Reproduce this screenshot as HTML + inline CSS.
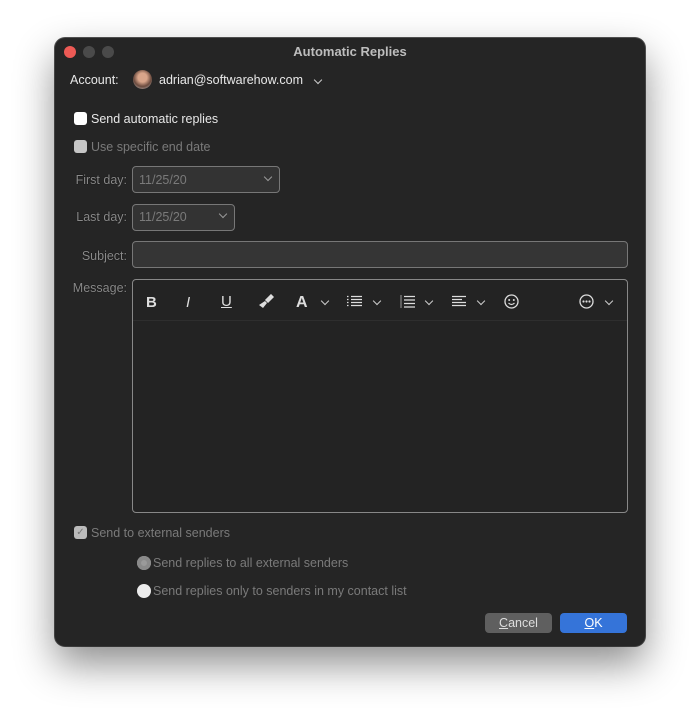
<!DOCTYPE html>
<html><head><style>
body{margin:0;width:700px;height:719px;background:#fff;position:relative;overflow:hidden;font-family:"Liberation Sans",sans-serif;}
.win{position:absolute;left:55px;top:38px;width:590px;height:608px;background:#252525;border-radius:10px;box-shadow:0 18px 40px rgba(0,0,0,.45),0 0 0 1px #555;}
.a{position:absolute;}
.t{font-size:12.5px;color:#e8e8e8;}
.d{font-size:12.5px;color:#7a7a7a;}
.lab{font-size:12.5px;color:#8a8a8a;text-align:right;width:72px;text-shadow:0 0 1px #000;}
.box{position:absolute;border:1px solid #777;border-radius:4px;background:#333;}
.cb{position:absolute;width:13px;height:13px;border-radius:3px;}
.ic{position:absolute;color:#ddd;font-size:15px;font-weight:bold;}
.chev{position:absolute;width:5px;height:5px;border-right:1.4px solid #ccc;border-bottom:1.4px solid #ccc;transform:rotate(45deg);}
svg{position:absolute;}
</style></head><body>
<div class="win">
  <div class="a" style="left:9px;top:8px;width:12px;height:12px;border-radius:50%;background:#ed5a55"></div>
  <div class="a" style="left:28px;top:8px;width:12px;height:12px;border-radius:50%;background:#4a4a4a"></div>
  <div class="a" style="left:47px;top:8px;width:12px;height:12px;border-radius:50%;background:#4a4a4a"></div>
  <div class="a" style="left:0;width:590px;top:6px;text-align:center;font-size:13px;font-weight:bold;color:#bdbdbd">Automatic Replies</div>

  <div class="a t" style="left:15px;top:35px">Account:</div>
  <div class="a" style="left:78px;top:32px;width:19px;height:19px;border-radius:50%;background:radial-gradient(circle at 50% 40%,#d9a58a 0 30%,#6a4a3e 60%,#ccc 100%)"></div>
  <div class="a t" style="left:104px;top:35px">adrian@softwarehow.com</div>
  <div class="chev" style="left:260px;top:39px"></div>

  <div class="cb" style="left:19px;top:74px;background:#fff"></div>
  <div class="a t" style="left:36px;top:74px">Send automatic replies</div>
  <div class="cb" style="left:19px;top:102px;background:#d8d8d8;opacity:.9"></div>
  <div class="a d" style="left:36px;top:102px">Use specific end date</div>

  <div class="a lab" style="left:0;top:135px">First day:</div>
  <div class="box" style="left:77px;top:128px;width:146px;height:25px"></div>
  <div class="a d" style="left:84px;top:135px">11/25/20</div>
  <div class="chev" style="left:210px;top:136px;border-color:#999"></div>

  <div class="a lab" style="left:0;top:172px">Last day:</div>
  <div class="box" style="left:77px;top:166px;width:101px;height:25px"></div>
  <div class="a d" style="left:84px;top:172px">11/25/20</div>
  <div class="chev" style="left:165px;top:173px;border-color:#999"></div>

  <div class="a lab" style="left:0;top:211px">Subject:</div>
  <div class="box" style="left:77px;top:203px;width:494px;height:25px;background:#353535"></div>

  <div class="a lab" style="left:0;top:243px">Message:</div>
  <div class="box" style="left:77px;top:241px;width:494px;height:232px;background:#232323;border-color:#888"></div>
  <div class="a" style="left:78px;top:282px;width:494px;height:1px;background:#2e2e2e"></div>
  <div class="ic" style="left:91px;top:256px">B</div>
  <div class="ic" style="left:131px;top:256px;font-style:italic;font-weight:normal">I</div>
  <div class="ic" style="left:166px;top:255px;text-decoration:underline;font-weight:normal">U</div>
  <svg style="left:203px;top:256px" width="16" height="16" viewBox="0 0 16 16"><path d="M9 7l5-5M13 1l2 2-5 5-2-2z" stroke="#ddd" stroke-width="1.5" fill="#ddd"/><path d="M7 7l2 2-4 5-4-3z" fill="#ddd"/></svg>
  <div class="ic" style="left:241px;top:256px;font-size:16px">A</div>
  <div class="chev" style="left:267px;top:260px"></div>
  <svg style="left:292px;top:257px" width="15" height="13"><path d="M0 1.5h1.5M0 4.5h1.5M0 7.5h1.5M0 10.5h1.5M4 1.5h11M4 4.5h11M4 7.5h11M4 10.5h11" stroke="#ddd" stroke-width="1.3"/></svg>
  <div class="chev" style="left:319px;top:260px"></div>
  <svg style="left:345px;top:256px" width="15" height="15"><path d="M1 1v13" stroke="#999" stroke-width="1"/><path d="M4 2.5h11M4 6h11M4 9.5h11M4 13h11" stroke="#ddd" stroke-width="1.3"/></svg>
  <div class="chev" style="left:371px;top:260px"></div>
  <svg style="left:397px;top:257px" width="14" height="13"><path d="M0 1.5h14M0 4.5h10M0 7.5h14M0 10.5h14" stroke="#ddd" stroke-width="1.3"/></svg>
  <div class="chev" style="left:423px;top:260px"></div>
  <svg style="left:449px;top:256px" width="15" height="15"><circle cx="7.5" cy="7.5" r="6.5" stroke="#ddd" stroke-width="1.3" fill="none"/><circle cx="5.2" cy="6" r="1" fill="#ddd"/><circle cx="9.8" cy="6" r="1" fill="#ddd"/><path d="M4.5 9q3 3 6 0" stroke="#ddd" stroke-width="1.2" fill="none"/></svg>
  <svg style="left:524px;top:256px" width="15" height="15"><circle cx="7.5" cy="7.5" r="6.5" stroke="#ddd" stroke-width="1.3" fill="none"/><circle cx="4.5" cy="7.5" r="1.1" fill="#ddd"/><circle cx="7.5" cy="7.5" r="1.1" fill="#ddd"/><circle cx="10.5" cy="7.5" r="1.1" fill="#ddd"/></svg>
  <div class="chev" style="left:551px;top:260px"></div>

  <div class="cb" style="left:19px;top:488px;background:#bbb;color:#777;font-size:10px;text-align:center;line-height:13px">✓</div>
  <div class="a d" style="left:36px;top:488px">Send to external senders</div>
  <div class="a" style="left:82px;top:518px;width:14px;height:14px;border-radius:50%;background:#9a9a9a;box-shadow:inset 0 0 0 4px #8a8a8a"></div>
  <div class="a d" style="left:98px;top:518px">Send replies to all external senders</div>
  <div class="a" style="left:82px;top:546px;width:14px;height:14px;border-radius:50%;background:#ececec"></div>
  <div class="a d" style="left:98px;top:546px">Send replies only to senders in my contact list</div>

  <div class="a" style="left:430px;top:575px;width:67px;height:20px;border-radius:4px;background:#5f5f5f;color:#ddd;font-size:12.5px;text-align:center;line-height:20px"><u>C</u>ancel</div>
  <div class="a" style="left:505px;top:575px;width:67px;height:20px;border-radius:4px;background:#3574d9;color:#fff;font-size:12.5px;text-align:center;line-height:20px"><u>O</u>K</div>
</div>
</body></html>
